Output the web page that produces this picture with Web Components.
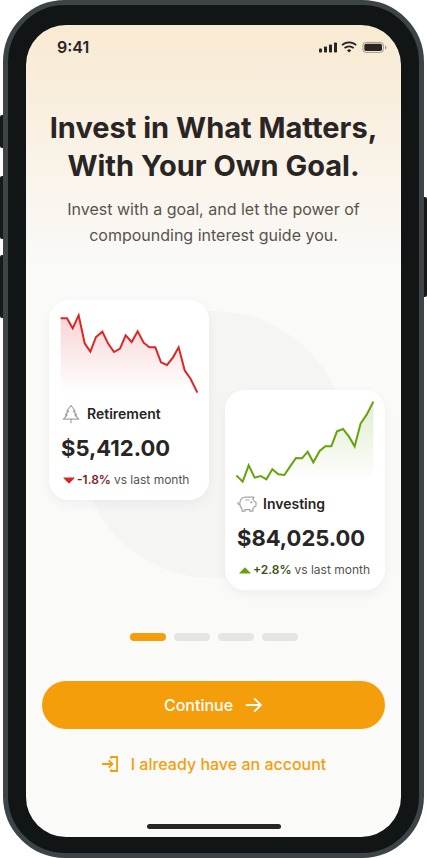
<!DOCTYPE html>
<html lang="en">
<head>
<meta charset="utf-8">
<meta name="viewport" content="width=device-width, initial-scale=1">
<title>Invest in What Matters</title>
<style>
  body {
    margin: 0;
    background: #fff;
    color: #292524;
    font: 400 16px/26px Inter, "Liberation Sans", sans-serif;
    --accent: #f59e0b;
    --muted: #57534e;
  }
</style>
</head>
<body>
<phone-frame>
  <status-bar>9:41</status-bar>
  <welcome-intro>
    <span slot="title">Invest in What Matters,<br>With Your Own Goal.</span>
    Invest with a goal, and let the power of<br>compounding interest guide you.
  </welcome-intro>
  <card-stage>
    <goal-card trend="down" amount="$5,412.00" change="-1.8%" points="62,85 81,85 98,115 116,76 134,160 151,185 168,141 187,125 204,160 222,186 240,176 257,136 275,156 293,124 311,158 328,172 346,172 363,217 381,225 399,202 416,172 434,241 452,267 472,308">
      <svg slot="icon" width="18" height="20" viewBox="0 0 18 20" fill="none" stroke="#a8a29e" stroke-width="1.2" stroke-linejoin="round" stroke-linecap="round" aria-hidden="true"><path d="M9 1.500 4.800 7h1.900L3.300 11h1.900L1.300 15.200h15.400L12.800 11h1.900L11.300 7h1.900zM9 15.200v3.600"/></svg>
      Retirement
    </goal-card>
    <goal-card trend="up" amount="$84,025.00" change="+2.8%" points="61,286 80,305 98,256 116,293 134,288 151,298 169,268 187,283 205,285 222,260 240,234 258,235 275,215 292,247 311,213 328,199 346,199 363,154 381,147 399,170 416,199 434,130 452,104 472,65">
      <svg slot="icon" width="20" height="18" viewBox="0 0 20 18" fill="none" stroke="#a8a29e" stroke-width="1.2" stroke-linejoin="round" stroke-linecap="round" aria-hidden="true"><path d="M2.800 8.200C3 4.300 5.600 2.200 9 2.200H17l-1.200 2.200c.8.700 1.300 1.400 1.700 2.300l1.500.6v3.600l-1.700.8c-.4.900-.9 1.500-1.500 2v2.500h-2.900V14.700H8v1.500H5.100v-2.500C3.600 12.600 2.700 10.700 2.800 8.200zM2.800 9.400C1.500 9.600.8 8.900.8 7.600M8.600 5h3.600"/><circle cx="14.300" cy="7.300" r=".5" fill="#a8a29e"/></svg>
      Investing
    </goal-card>
  </card-stage>
  <page-steps count="4" current="1"></page-steps>
  <action-list>
    <action-button kind="primary">Continue
      <svg slot="end" width="18" height="16" viewBox="0 0 18 16" fill="none" stroke="currentColor" stroke-width="1.800" stroke-linecap="round" stroke-linejoin="round" aria-hidden="true"><path d="M1.500 8h14M9.800 2l6 6-6 6"/></svg>
    </action-button>
    <action-button kind="text">
      <svg slot="start" width="18" height="18" viewBox="0 0 18 18" fill="none" stroke="currentColor" stroke-width="1.800" aria-hidden="true"><path d="M10 3.800V2h6v14h-6v-1.800M1 9h10M7.800 5.400 11.400 9l-3.600 3.600"/></svg>
      I already have an account
    </action-button>
  </action-list>
</phone-frame>

<script>
const define = (name, html, setup) => customElements.define(name, class extends HTMLElement {
  connectedCallback() {
    if (this.shadowRoot) return;
    const root = this.attachShadow({ mode: 'open' });
    root.innerHTML = html;
    if (setup) setup(this, root);
  }
});

define('phone-frame', `
<style>
  :host { display: grid; grid-template-columns: 3px 1fr 3px; min-height: 100vh; overflow: hidden; }
  .side { display: flex; flex-direction: column; }
  .side i { background: #15191a; border-radius: 2px 0 0 2px; }
  .left { padding-top: 115px; }
  .left .mute { height: 33px; margin-bottom: 28px; }
  .left .volume { height: 63px; margin-bottom: 16px; }
  .right { padding-top: 197px; }
  .right i { height: 100px; border-radius: 0 2px 2px 0; }
  .case { display: flex; box-sizing: border-box; border: 5px solid #3c4448; border-radius: 62px; background: #111516; padding: 20px 18px 16px; }
  main { flex: 1; min-width: 0; display: flex; flex-direction: column; border-radius: 40px; overflow: hidden;
    background: linear-gradient(#f9ead2 0, #f9efdf 80px, #faf3e8 140px, #fafaf9 245px); }
  footer { margin-top: auto; padding-bottom: 8px; display: flex; justify-content: center; }
  footer i { width: 134px; height: 5px; border-radius: 3px; background: #292524; }
</style>
<div class="side left"><i class="mute"></i><i class="volume"></i><i class="volume"></i></div>
<div class="case"><main><slot></slot><footer><i></i></footer></main></div>
<div class="side right"><i></i></div>`);

define('status-bar', `
<style>
  :host { display: flex; justify-content: space-between; align-items: center; height: 44px; padding: 0 14px 0 31px; font-weight: 600; }
</style>
<span><slot></slot></span>
<svg width="68" height="12" viewBox="0 0 68 12" fill="#292524" aria-hidden="true">
  <rect x="0" y="7.500" width="3" height="4" rx=".8"/><rect x="5" y="5.500" width="3" height="6" rx=".8"/><rect x="10" y="3.500" width="3" height="8" rx=".8"/><rect x="15" y="1.500" width="3" height="10" rx=".8"/>
  <g fill="none" stroke="#292524" stroke-width="1.700"><path d="M23 4.200a10.200 10.200 0 0 1 14.200 0M25.500 7.200a6.600 6.600 0 0 1 9.200 0"/></g>
  <path d="M28 9.400a3 3 0 0 1 4.200 0L30.100 11.500z"/>
  <rect x="43.900" y="1.400" width="20.500" height="10" rx="3" fill="none" stroke="#292524" stroke-opacity=".4"/>
  <rect x="45.300" y="2.800" width="17.700" height="7.200" rx="1.700"/><path d="M66 4.600v3.800a2 2 0 0 0 0-3.800z" opacity=".45"/>
</svg>`);

define('welcome-intro', `
<style>
  :host { display: block; padding: 40px 16px 0; text-align: center; white-space: nowrap; }
  h1 { margin: 0 0 11px; font-size: 29px; line-height: 38px; font-weight: 700; }
  p { margin: 0; color: var(--muted); }
</style>
<h1><slot name="title"></slot></h1><p><slot></slot></p>`);

define('card-stage', `
<style>
  :host { display: grid; margin-top: 52px; }
  .disc { grid-area: 1 / 1; justify-self: center; width: 267px; height: 267px; margin-top: 11px; border-radius: 50%; background: #f5f5f4; }
  .cards { grid-area: 1 / 1; display: flex; justify-content: center; align-items: flex-start; gap: 16px; padding: 0 16px 0 23px; }
  ::slotted(goal-card:last-child) { margin-top: 90px; }
</style>
<div class="disc"></div><div class="cards"><slot></slot></div>`);

define('goal-card', `
<style>
  :host { display: block; flex: 0 1 160px; min-width: 0; border-radius: 20px; background: #fff; box-shadow: 0 4px 12px rgb(28 25 23 / 5%); white-space: nowrap; }
  .chart { display: block; width: 100%; overflow: visible; }
  .line { fill: none; stroke: var(--tone); stroke-width: 6; stroke-linejoin: miter; }
  .body { padding: 4px 12px 12px; }
  h2 { display: flex; align-items: center; gap: 6px; margin: 0; font-size: 14px; line-height: 20px; font-weight: 600; }
  h2 .icon { display: flex; justify-content: center; width: 20px; }
  .amount { margin: 8px 0; font-size: 22px; line-height: 32px; font-weight: 700; }
  .change { display: flex; align-items: center; margin: 0; font-size: 12px; line-height: 16px; color: var(--muted); }
  .change svg { margin: 0 2px; }
  b { color: var(--deep); margin-right: 3px; font-weight: 600; }
</style>
<svg class="chart" viewBox="27 30 480 300" aria-hidden="true">
  <defs><linearGradient id="fade" x1="0" y1="0" x2="0" y2="1"><stop offset="0" stop-color="var(--tone)" stop-opacity=".2"/><stop offset="1" stop-color="var(--tone)" stop-opacity="0"/></linearGradient></defs>
  <polygon class="area" fill="url(#fade)"/><polyline class="line"/>
</svg>
<div class="body">
  <h2><span class="icon"><slot name="icon"></slot></span><span><slot></slot></span></h2>
  <p class="amount"></p>
  <p class="change"><svg width="12" height="7" viewBox="0 0 12 7" aria-hidden="true"><path class="mark"/></svg><b></b><span>vs last month</span></p>
</div>`, (el, root) => {
  const up = el.getAttribute('trend') === 'up';
  const points = el.getAttribute('points');
  const xs = points.split(' ').map(p => p.split(',')[0]);
  el.style.setProperty('--tone', up ? '#65a30d' : '#dc2626');
  el.style.setProperty('--deep', up ? '#365314' : '#7f1d1d');
  root.querySelector('.line').setAttribute('points', points);
  root.querySelector('.area').setAttribute('points', `${points} ${xs[xs.length - 1]},304 ${xs[0]},304`);
  root.querySelector('.amount').textContent = el.getAttribute('amount');
  root.querySelector('b').textContent = el.getAttribute('change');
  const mark = root.querySelector('.mark');
  mark.setAttribute('d', up ? 'M.6 6.500Q0 6.500.4 6L5.200 1Q6 .2 6.800 1L11.600 6q.4.500-.2.500z' : 'M.6.500Q0 .5.4 1L5.200 6Q6 6.800 6.800 6L11.600 1q.4-.5-.2-.5z');
  mark.setAttribute('fill', up ? '#65a30d' : '#dc2626');
});

define('page-steps', `
<style>
  :host { display: flex; justify-content: center; gap: 8px; padding: 43px 0 40px; }
  i { width: 36px; height: 8px; border-radius: 4px; background: #e7e5e4; }
  i.on { background: var(--accent); }
</style>`, (el, root) => {
  for (let n = 1; n <= Number(el.getAttribute('count')); n++) {
    const step = document.createElement('i');
    if (n === Number(el.getAttribute('current'))) step.className = 'on';
    root.append(step);
  }
});

define('action-list', `
<style>:host { display: flex; flex-direction: column; gap: 11px; padding: 0 16px; }</style><slot></slot>`);

define('action-button', `
<style>
  :host { display: block; }
  button { display: flex; justify-content: center; align-items: center; gap: 12px; width: 100%; height: 48px; padding: 0; border: 0; border-radius: 24px;
    background: none; color: var(--accent); font: inherit; font-weight: 500; cursor: pointer; }
  :host([kind=primary]) button { background: var(--accent); color: #fff; }
</style>
<button type="button"><slot name="start"></slot><span><slot></slot></span><slot name="end"></slot></button>`);
</script>
</body>
</html>
